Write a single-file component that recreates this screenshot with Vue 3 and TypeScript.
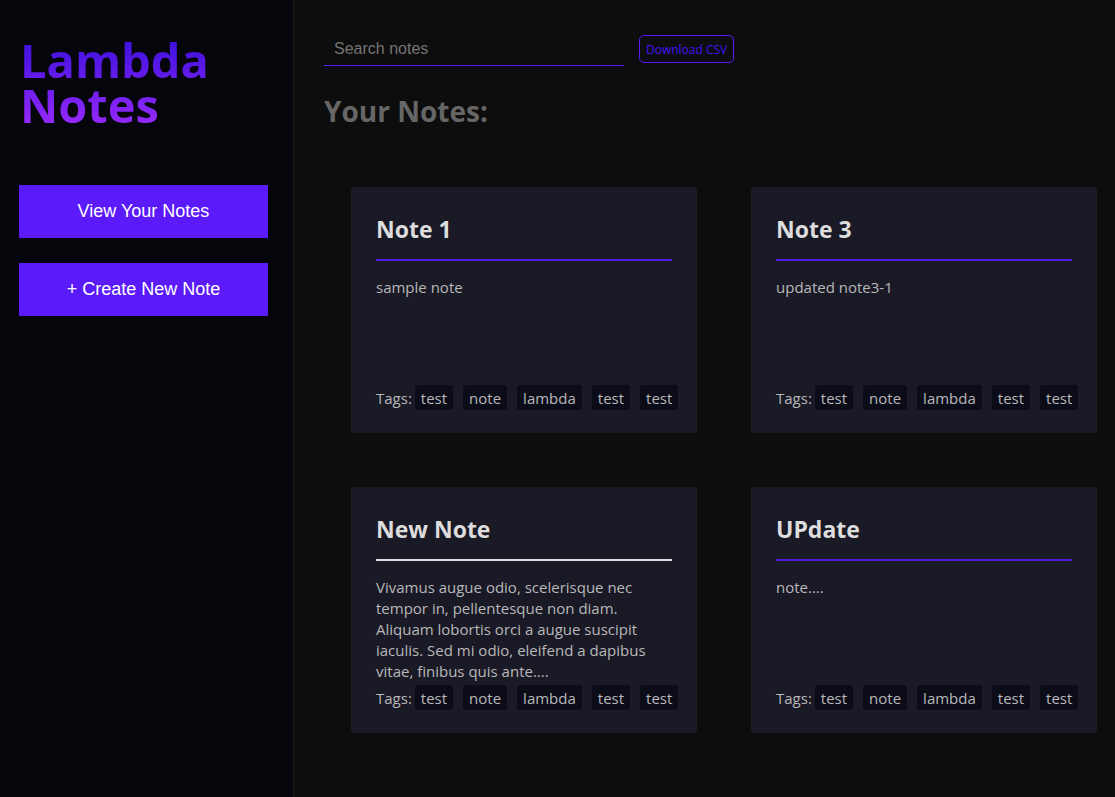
<script setup lang="ts">
import { computed, ref } from 'vue'

interface Note {
  id: number
  title: string
  body: string
  tags: string[]
}

const tags = ['test', 'note', 'lambda', 'test', 'test']

const notes: Note[] = [
  { id: 1, title: 'Note 1', body: 'sample note', tags },
  { id: 2, title: 'Note 3', body: 'updated note3-1', tags },
  {
    id: 3,
    title: 'New Note',
    body: 'Vivamus augue odio, scelerisque nec tempor in, pellentesque non diam. Aliquam lobortis orci a augue suscipit iaculis. Sed mi odio, eleifend a dapibus vitae, finibus quis ante....',
    tags,
  },
  { id: 4, title: 'UPdate', body: 'note....', tags },
]

const search = ref('')
const activeId = ref(3)

const visibleNotes = computed(() => {
  const term = search.value.trim().toLowerCase()
  return notes.filter((n) => (n.title + ' ' + n.body).toLowerCase().includes(term))
})
</script>

<template>
  <div class="app">
    <aside class="sidebar">
      <h1 class="brand">Lambda Notes</h1>
      <nav class="nav">
        <button type="button" class="nav-button">View Your Notes</button>
        <button type="button" class="nav-button">+ Create New Note</button>
      </nav>
    </aside>

    <main class="main">
      <div class="toolbar">
        <input v-model="search" class="search" type="text" placeholder="Search notes" aria-label="Search notes" />
        <button type="button" class="download">Download CSV</button>
      </div>
      <h2 class="heading">Your Notes:</h2>
      <section class="grid">
        <article
          v-for="note in visibleNotes"
          :key="note.id"
          class="card"
          :class="{ active: note.id === activeId }"
        >
          <h3 class="title">{{ note.title }}</h3>
          <p class="body">{{ note.body }}</p>
          <div class="tags">
            <span class="tags-label">Tags:</span>
            <span v-for="(tag, i) in note.tags" :key="i" class="tag">{{ tag }}</span>
          </div>
        </article>
      </section>
    </main>
  </div>
</template>

<style>
body {
  margin: 0;
  background: #0d0d0d;
}
</style>

<style scoped>
.app {
  display: flex;
  min-height: 100vh;
  background: #0d0d0d;
  color: #b8b8b8;
  font-family: "Segoe UI", "Open Sans", "Noto Sans", sans-serif;
  font-size: 15px;
}

.sidebar {
  flex: 0 0 294px;
  box-sizing: border-box;
  padding: 38px 25px 0 19px;
  border-right: 1px solid #1b1b1b;
  background: #05050b;
}

.brand {
  margin: 0;
  padding: 0 40px 5px 1px;
  font-size: 47px;
  font-weight: 700;
  line-height: 45px;
  color: transparent;
  background: linear-gradient(#3a10dc, #9d2bff);
  background-clip: text;
  -webkit-background-clip: text;
}

.nav {
  display: flex;
  flex-direction: column;
  gap: 25px;
  margin-top: 52px;
}

.nav-button {
  height: 53px;
  padding: 0;
  border: 0;
  background: #5a1af9;
  color: #fff;
  font-family: "Liberation Sans", Arial, sans-serif;
  font-size: 18px;
}

.main {
  flex: 1;
  min-width: 0;
  padding: 30px 18px 30px 30px;
}

.toolbar {
  display: flex;
  align-items: flex-end;
  gap: 15px;
}

.search {
  box-sizing: border-box;
  width: 300px;
  height: 36px;
  padding: 2px 10px 0;
  border: 0;
  border-bottom: 1px solid #5a1af9;
  outline: 0;
  background: transparent;
  color: #ccc;
  font-family: "Liberation Sans", Arial, sans-serif;
  font-size: 16px;
}

.search::placeholder {
  color: #757575;
}

.download {
  height: 28px;
  margin-bottom: 3px;
  padding: 0 6px;
  border: 1px solid #5a1af9;
  border-radius: 5px;
  background: transparent;
  color: #4413f5;
  font-family: inherit;
  font-size: 12px;
}

.heading {
  margin: 25px 0 55px;
  font-size: 28px;
  line-height: 41px;
  color: #666;
}

.grid {
  display: grid;
  grid-template-columns: repeat(2, minmax(0, 1fr));
  gap: 54px;
  padding-left: 27px;
}

.card {
  display: flex;
  flex-direction: column;
  box-sizing: border-box;
  min-height: 246px;
  padding: 25px 25px 23px;
  border-radius: 2px;
  background: #1a1926;
}

.title {
  margin: 0 0 16px;
  padding-bottom: 13px;
  border-bottom: 2px solid #5519e6;
  color: #ddd;
  font-size: 23px;
  line-height: 34px;
}

.active .title {
  border-color: #ddd;
}

.body {
  flex: 1;
  margin: 0;
  line-height: 21px;
}

.tags {
  display: flex;
  gap: 10px;
  margin-top: 3px;
  line-height: 23px;
  white-space: nowrap;
}

.tags-label {
  margin-right: -7px;
  padding-top: 2px;
}

.tag {
  padding: 2px 6px 0;
  border-radius: 3px;
  background: #0c0b18;
}
</style>
